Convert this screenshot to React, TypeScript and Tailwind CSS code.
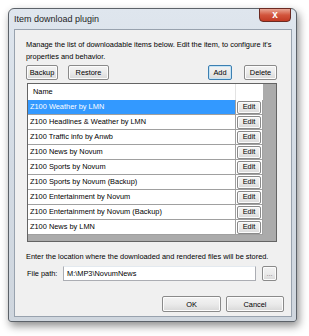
const items = [
  "Z100 Weather by LMN",
  "Z100 Headlines & Weather by LMN",
  "Z100 Traffic info by Anwb",
  "Z100 News by Novum",
  "Z100 Sports by Novum",
  "Z100 Sports by Novum (Backup)",
  "Z100 Entertainment by Novum",
  "Z100 Entertainment by Novum (Backup)",
  "Z100 News by LMN",
];

function Btn({
  label,
  className = "",
  primary = false,
}: {
  label: string;
  className?: string;
  primary?: boolean;
}) {
  return (
    <div
      className={`flex items-center justify-center rounded-[2px] border bg-gradient-to-b from-[#f3f3f3] via-[#ebebeb] to-[#d8d8d8] ${
        primary ? "border-[#3c7fb1] shadow-[inset_0_0_0_1px_#c4e3f5]" : "border-[#8a8a8a] shadow-[inset_0_0_0_1px_#fcfcfc]"
      } ${className}`}
    >
      {label}
    </div>
  );
}

export default function App() {
  return (
    <div
      className="w-[309px] h-[336px] bg-white pl-[8px] pt-[8px] text-[7.4px] text-black leading-none whitespace-nowrap"
      style={{ fontFamily: '"Liberation Sans", Arial, sans-serif' }}
    >
      {/* ── Window frame ── */}
      <div className="w-[289px] h-[314px] rounded-t-[6px] rounded-b-[3px] border border-[#5c6269] bg-gradient-to-b from-[#dfe6ee] via-[#d3dbe4] to-[#cfd6de] shadow-[2px_4px_8px_rgba(0,0,0,0.45)] flex flex-col">
        {/* Title bar */}
        <div className="h-[20px] flex items-start pl-[5px] pr-[5px]">
          <span className="text-[9px] mt-[6px] text-[#1e1e1e]">Item download plugin</span>
          <div className="flex-1" />
          <div className="w-[32px] h-[14px] -mt-px rounded-b-[4px] border border-[#6b2a22] bg-gradient-to-b from-[#e8a493] via-[#d2553d] to-[#c23a23] flex items-center justify-center">
            <span className="text-white text-[10px] font-bold leading-none">x</span>
          </div>
        </div>

        {/* Client area */}
        <div className="ml-[5px] mr-[4px] h-[288px] border border-[#98a2ae] bg-[#f0f0f0] flex flex-col pl-[11px] pr-[14px]">
          <div className="mt-[9px] leading-[12px]">
            Manage the list of downloadable items below. Edit the item, to configure it's
            <br />
            properties and behavior.
          </div>

          <div className="mt-[2px] flex h-[15px]">
            <Btn label="Backup" className="w-[32px]" />
            <Btn label="Restore" className="w-[41px] ml-[10px]" />
            <div className="flex-1" />
            <Btn label="Add" className="w-[24px]" primary />
            <Btn label="Delete" className="w-[33px] ml-[12px]" />
          </div>

          {/* Grid */}
          <div className="mt-[3px] ml-px h-[159px] border border-[#646464] bg-[#ababab] flex flex-col">
            <div className="h-[16px] flex shrink-0">
              <div className="w-[208px] bg-white border-r border-[#e3e3e3] flex items-center pl-[5px]">Name</div>
              <div className="w-[27px] bg-white" />
            </div>
            {items.map((name, i) => (
              <div key={name} className="h-[15px] flex shrink-0">
                <div
                  className={`w-[208px] border-r border-b border-[#a0a0a0] flex items-center pl-[2px] ${
                    i === 0 ? "bg-[#3399ff] text-white" : "bg-white"
                  }`}
                >
                  {name}
                </div>
                <div className="w-[27px] bg-white border-b border-r border-[#a0a0a0] flex items-center pl-px">
                  <Btn label="Edit" className="w-[24px] h-[13px]" />
                </div>
              </div>
            ))}
          </div>

          <div className="mt-[11px]">Enter the location where the downloaded and rendered files will be stored.</div>

          <div className="mt-[6px] h-[15px] flex items-center">
            <span className="w-[37px] pl-px">File path:</span>
            <div className="w-[193px] h-[15px] border border-[#abadb3] border-t-[#e3e9ef] bg-white flex items-center pl-[3px]">
              M:\MP3\NovumNews
            </div>
            <div className="flex-1" />
            <Btn label="..." className="w-[15px] h-[15px] text-[#808080]" />
          </div>

          <div className="mt-[15px] flex h-[16px] -mr-[7px] justify-end">
            <Btn label="OK" className="w-[59px]" />
            <Btn label="Cancel" className="w-[58px] ml-[5px]" />
          </div>
        </div>
      </div>
    </div>
  );
}
